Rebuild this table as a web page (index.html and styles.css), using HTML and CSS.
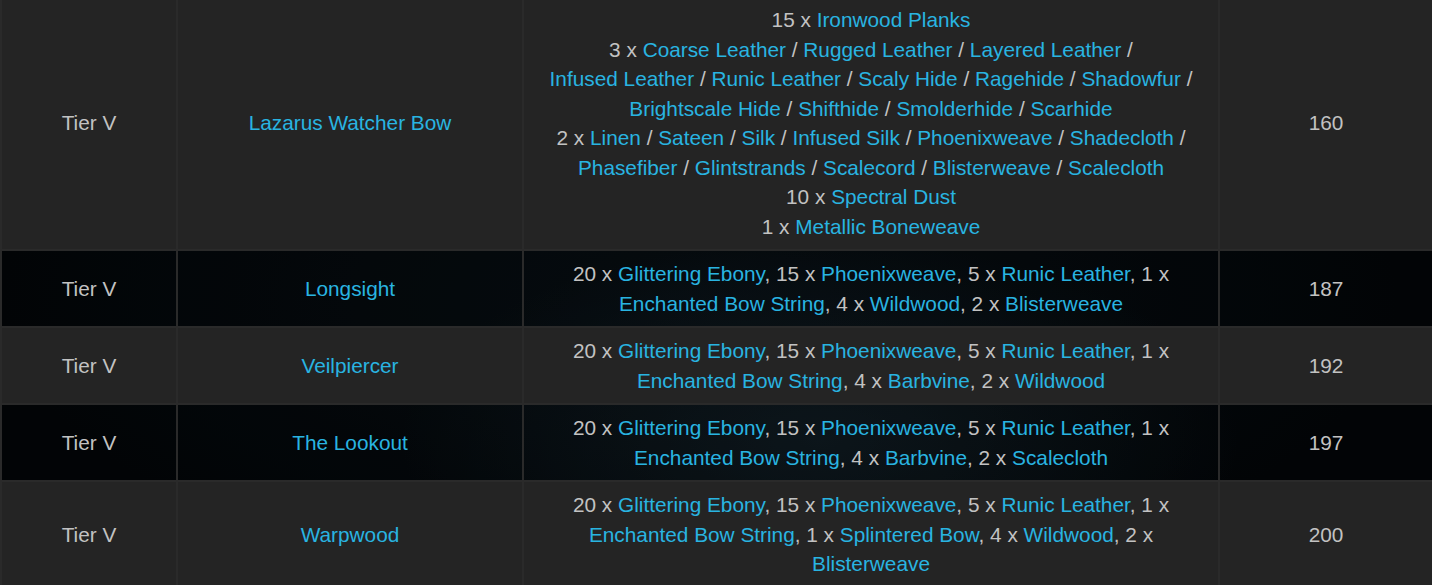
FILE: index.html
```html
<!DOCTYPE html>
<html>
<head>
<meta charset="utf-8">
<link rel="stylesheet" href="styles.css">
</head>
<body>
<table class="recipes">
  <colgroup>
    <col class="c-tier"><col class="c-name"><col class="c-mat"><col class="c-lvl">
  </colgroup>
  <tbody>
    <tr class="odd">
      <td>Tier V</td>
      <td><a>Lazarus Watcher Bow</a></td>
      <td class="mat">15 x <a>Ironwood Planks</a><br>3 x <a>Coarse Leather</a> / <a>Rugged Leather</a> / <a>Layered Leather</a> / <a>Infused Leather</a> / <a>Runic Leather</a> / <a>Scaly Hide</a> / <a>Ragehide</a> / <a>Shadowfur</a> / <a>Brightscale Hide</a> / <a>Shifthide</a> / <a>Smolderhide</a> / <a>Scarhide</a><br>2 x <a>Linen</a> / <a>Sateen</a> / <a>Silk</a> / <a>Infused Silk</a> / <a>Phoenixweave</a> / <a>Shadecloth</a> / <a>Phasefiber</a> / <a>Glintstrands</a> / <a>Scalecord</a> / <a>Blisterweave</a> / <a>Scalecloth</a><br>10 x <a>Spectral Dust</a><br>1 x <a>Metallic Boneweave</a></td>
      <td>160</td>
    </tr>
    <tr class="even">
      <td>Tier V</td>
      <td><a>Longsight</a></td>
      <td class="mat">20 x <a>Glittering Ebony</a>, 15 x <a>Phoenixweave</a>, 5 x <a>Runic Leather</a>, 1 x <a>Enchanted Bow String</a>, 4 x <a>Wildwood</a>, 2 x <a>Blisterweave</a></td>
      <td>187</td>
    </tr>
    <tr class="odd">
      <td>Tier V</td>
      <td><a>Veilpiercer</a></td>
      <td class="mat">20 x <a>Glittering Ebony</a>, 15 x <a>Phoenixweave</a>, 5 x <a>Runic Leather</a>, 1 x <a>Enchanted Bow String</a>, 4 x <a>Barbvine</a>, 2 x <a>Wildwood</a></td>
      <td>192</td>
    </tr>
    <tr class="even">
      <td>Tier V</td>
      <td><a>The Lookout</a></td>
      <td class="mat">20 x <a>Glittering Ebony</a>, 15 x <a>Phoenixweave</a>, 5 x <a>Runic Leather</a>, 1 x <a>Enchanted Bow String</a>, 4 x <a>Barbvine</a>, 2 x <a>Scalecloth</a></td>
      <td>197</td>
    </tr>
    <tr class="odd">
      <td>Tier V</td>
      <td><a>Warpwood</a></td>
      <td class="mat">20 x <a>Glittering Ebony</a>, 15 x <a>Phoenixweave</a>, 5 x <a>Runic Leather</a>, 1 x <a>Enchanted Bow String</a>, 1 x <a>Splintered Bow</a>, 4 x <a>Wildwood</a>, 2 x <a>Blisterweave</a></td>
      <td>200</td>
    </tr>
  </tbody>
</table>
</body>
</html>
```
FILE: styles.css
```css
html, body {
  margin: 0;
  padding: 0;
}
body {
  width: 1432px;
  height: 585px;
  overflow: hidden;
  background:
    radial-gradient(ellipse 420px 200px at 820px 440px, rgba(45, 75, 90, 0.3), rgba(45, 75, 90, 0) 100%),
    radial-gradient(ellipse 700px 300px at 700px 300px, rgba(20, 35, 45, 0.35), rgba(20, 35, 45, 0) 100%),
    #03070a;
  font-family: "Liberation Sans", Arial, Helvetica, sans-serif;
  font-size: 20.8px;
  line-height: 29.5px;
  color: #c2c2c2;
}
.recipes {
  width: 1432px;
  margin-top: -5px;
  border-collapse: collapse;
  table-layout: fixed;
}
.c-tier { width: 176px; }
.c-name { width: 346px; }
.c-mat { width: 696px; }
.c-lvl { width: 214px; }
.recipes td {
  border: 2px solid #2a2a2a;
  padding: 8px 8px;
  text-align: center;
  vertical-align: middle;
}
.recipes td.mat {
  padding-left: 17px;
  padding-right: 17px;
}
.recipes tr.odd td {
  background: #242424;
}
.recipes tr.even td {
  background: rgba(0, 0, 0, 0.3);
}
.recipes a {
  color: #29b4e1;
  text-decoration: none;
  white-space: nowrap;
}
```
